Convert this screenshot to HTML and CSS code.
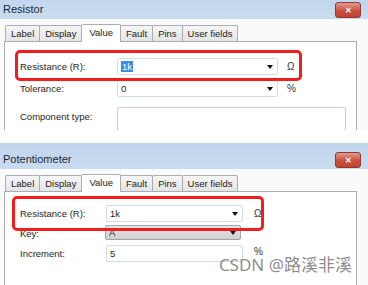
FILE: index.html
```html
<!DOCTYPE html>
<html lang="en">
<head>
    <meta charset="UTF-8">
    <title>Resistor / Potentiometer</title>
    <link rel="stylesheet" href="styles.css">
</head>
<body>

<!-- Resistor dialog (top crop) -->
<section class="dialog dialog-top">
    <div class="titlebar">
        <span class="title">Resistor</span>
        <span class="close">&#x2715;</span>
    </div>
    <div class="client">
        <div class="tabs">
            <span class="tab">Label</span>
            <span class="tab">Display</span>
            <span class="tab active">Value</span>
            <span class="tab">Fault</span>
            <span class="tab">Pins</span>
            <span class="tab">User fields</span>
        </div>
        <div class="panel">
            <div class="mark"></div>
            <div class="form">
                <label>Resistance (R):</label>
                <div class="field combo"><span class="selected">1k</span><span class="arrow"></span></div>
                <span class="unit">&Omega;</span>

                <label>Tolerance:</label>
                <div class="field combo"><span>0</span><span class="arrow"></span></div>
                <span class="unit">%</span>

                <label class="spaced">Component type:</label>
                <div class="field wide spaced"></div>
            </div>
        </div>
    </div>
</section>

<!-- Potentiometer dialog (bottom crop) -->
<section class="dialog dialog-bottom">
    <div class="titlebar">
        <span class="title">Potentiometer</span>
        <span class="close">&#x2715;</span>
    </div>
    <div class="client">
        <div class="tabs">
            <span class="tab">Label</span>
            <span class="tab">Display</span>
            <span class="tab active">Value</span>
            <span class="tab">Fault</span>
            <span class="tab">Pins</span>
            <span class="tab">User fields</span>
        </div>
        <div class="panel">
            <div class="mark"></div>
            <div class="form">
                <label>Resistance (R):</label>
                <div class="field combo"><span>1k</span><span class="arrow"></span></div>
                <span class="unit">&Omega;</span>

                <label>Key:</label>
                <div class="field combo disabled"><span>A</span><span class="arrow"></span></div>
                <span class="unit"></span>

                <label>Increment:</label>
                <div class="field"><span>5</span></div>
                <span class="unit pct">%</span>
            </div>
        </div>
    </div>
    <div class="watermark">CSDN @路溪非溪</div>
</section>

</body>
</html>
```

FILE: styles.css
```css
body {
    margin: 0;
    background-color: #fff;
    font-family: "Liberation Sans", Arial, sans-serif;
    color: #1e1e1e;
    width: 368px;
    height: 285px;
    overflow: hidden;
}

.dialog {
    position: relative;
    background-color: #c9dcef;
    overflow: hidden;
}

.dialog-top {
    margin-top: -7px;
    height: 137px;
}

.dialog-bottom {
    margin-top: 13px;
    height: 142px;
}

/* title bar */
.titlebar {
    height: 26px;
    display: flex;
    align-items: center;
    justify-content: space-between;
    padding: 0 7px 0 3px;
    background: linear-gradient(#bed4ec, #cadcef);
}

.title {
    font-size: 11px;
    color: #1a2a3a;
    padding-top: 6px;
}

.close {
    width: 24px;
    height: 14px;
    margin-top: 8px;
    border: 1px solid #8e3a32;
    border-radius: 3px;
    background: linear-gradient(#e19a8f, #c8503f 55%, #c0432f);
    color: #fff;
    font-size: 8px;
    font-weight: bold;
    display: flex;
    align-items: center;
    justify-content: center;
}

/* client area */
.client {
    background-color: #fafafa;
    padding: 5px 11px 0 4px;
    height: 100%;
}

.tabs {
    display: flex;
    align-items: flex-end;
    height: 17px;
    padding-left: 1px;
}

.tab {
    height: 15px;
    padding: 0 5px;
    margin-right: -1px;
    border: 1px solid #a9adb4;
    border-bottom: none;
    border-radius: 2px 2px 0 0;
    background: linear-gradient(#f6f6f6, #e4e4e4);
    font-size: 9.5px;
    line-height: 15px;
    color: #222;
}

.tab.active {
    height: 17px;
    padding: 0 7px;
    background: #fff;
    position: relative;
    z-index: 1;
    margin-bottom: -1px;
}

.panel {
    position: relative;
    background-color: #fff;
    border: 1px solid #a9adb4;
    height: 200px;
}

/* red highlight drawn over the first row */
.mark {
    position: absolute;
    border: 3px solid #f21d1d;
    border-radius: 5px;
    z-index: 2;
}

.dialog-top .mark {
    left: 10px;
    top: 8px;
    width: 281px;
    height: 25px;
}

.dialog-bottom .mark {
    left: 7px;
    top: 4px;
    width: 246px;
    height: 29px;
}

/* form rows */
.form {
    display: grid;
    align-items: center;
    row-gap: 5px;
    font-size: 9.5px;
}

.dialog-top .form {
    grid-template-columns: 97px 161px auto;
    padding: 16px 0 0 15px;
}

.dialog-bottom .form {
    grid-template-columns: 86px 137px auto;
    padding: 13px 0 0 15px;
}

.form label {
    color: #1e1e1e;
}

.field {
    height: 15px;
    border: 1px solid #d3dde8;
    border-radius: 2px;
    background-color: #fff;
    display: flex;
    align-items: center;
    justify-content: space-between;
    padding: 0 4px 0 3px;
    font-size: 9.5px;
}

.field.wide {
    width: 220px;
    height: 22px;
    grid-column: 2 / 4;
    border-color: #c7ccd3;
}

.spaced {
    margin-top: 5px;
}

.dialog-top .form label.spaced {
    align-self: start;
    margin-top: 9px;
}

.field.disabled {
    height: 13px;
    border-color: #a5a5a5;
    background: linear-gradient(#e8e8e8, #cfcfcf);
    margin: -2px 2px 0 -1px;
}

.selected {
    background-color: #3a8ee6;
    color: #fff;
    padding: 0 1px;
}

.arrow {
    width: 0;
    height: 0;
    border-left: 3px solid transparent;
    border-right: 3px solid transparent;
    border-top: 4px solid #111;
}

.unit {
    padding-left: 9px;
    font-size: 10px;
    color: #333;
}

.dialog-bottom .unit {
    padding-left: 11px;
}

.dialog-bottom .unit.pct {
    margin-top: -4px;
}

.watermark {
    position: absolute;
    right: 16px;
    bottom: 9px;
    font-family: "Noto Sans", "Noto Sans CJK SC", sans-serif;
    font-size: 17px;
    color: rgba(110, 110, 110, 0.8);
    z-index: 3;
}
```
